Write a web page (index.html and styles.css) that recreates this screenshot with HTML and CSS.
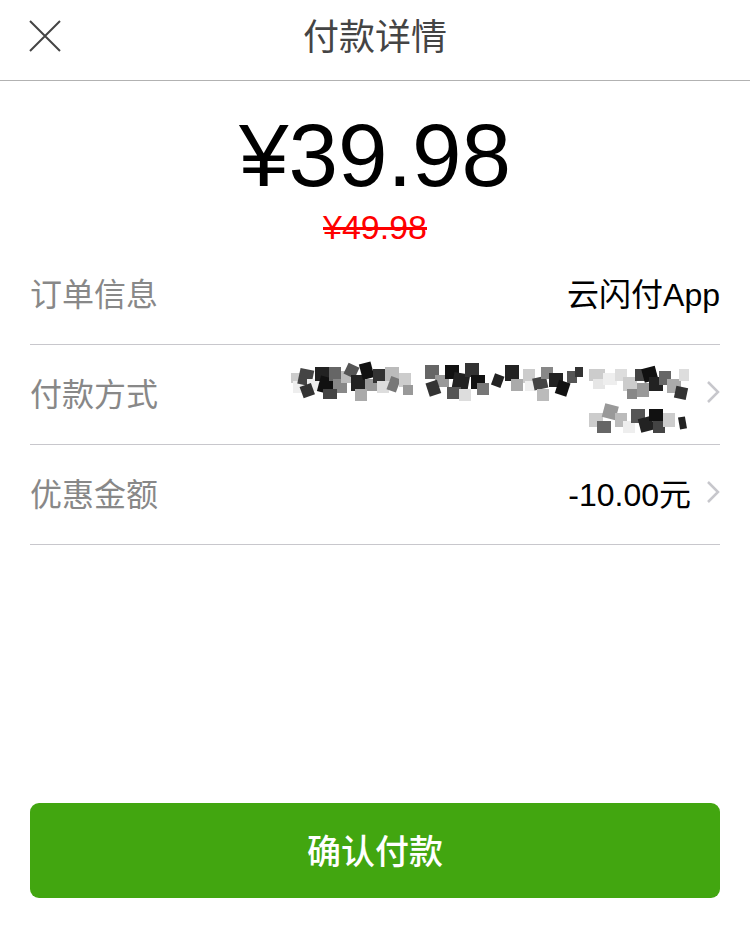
FILE: index.html
```html
<!DOCTYPE html>
<html lang="zh-CN">
<head>
<meta charset="utf-8">
<title>付款详情</title>
<link rel="stylesheet" href="styles.css">
</head>
<body>
<header class="nav">
  <div class="nav-left">
    <svg class="close" width="32" height="32" viewBox="0 0 32 32"><path d="M1 1 L31 31 M31 1 L1 31" stroke="#444" stroke-width="2" fill="none"/></svg>
  </div>
  <h1 class="nav-title">付款详情</h1>
  <div class="nav-right"></div>
</header>

<section class="price">
  <div class="price-now">¥39.98</div>
  <div class="price-old">¥49.98</div>
</section>

<ul class="rows">
  <li class="row">
    <span class="label">订单信息</span>
    <span class="value">云闪付App</span>
  </li>
  <li class="row">
    <span class="label">付款方式</span>
    <span class="value-wrap">
      <svg class="mosaic" width="402" height="76" viewBox="0 0 402 76">
        <g>
          <rect x="2" y="12" width="14" height="10" fill="#ccc"/>
          <rect x="4" y="20" width="12" height="12" fill="#eee"/>
          <rect x="10" y="8" width="14" height="16" fill="#444" transform="rotate(12 16 15)"/>
          <rect x="18" y="18" width="12" height="12" fill="#eee"/>
          <rect x="12" y="24" width="12" height="12" fill="#333" transform="rotate(-20 17 29)"/>
          <rect x="26" y="6" width="14" height="14" fill="#222"/>
          <rect x="30" y="16" width="16" height="16" fill="#111" transform="rotate(15 37 23)"/>
          <rect x="40" y="6" width="12" height="14" fill="#666"/>
          <rect x="44" y="18" width="14" height="14" fill="#888"/>
          <rect x="34" y="28" width="14" height="10" fill="#444"/>
          <rect x="52" y="10" width="12" height="12" fill="#bbb"/>
          <rect x="56" y="4" width="12" height="12" fill="#555" transform="rotate(25 63 11)"/>
          <rect x="62" y="14" width="14" height="16" fill="#222"/>
          <rect x="72" y="2" width="12" height="16" fill="#111" transform="rotate(-15 77 11)"/>
          <rect x="76" y="18" width="12" height="12" fill="#999"/>
          <rect x="66" y="28" width="12" height="12" fill="#aaa"/>
          <rect x="84" y="8" width="12" height="14" fill="#333"/>
          <rect x="88" y="20" width="12" height="12" fill="#ddd"/>
          <rect x="96" y="6" width="14" height="14" fill="#bbb"/>
          <rect x="100" y="16" width="10" height="14" fill="#777" transform="rotate(20 104 22)"/>
          <rect x="110" y="12" width="12" height="14" fill="#ccc"/>
          <rect x="114" y="24" width="10" height="10" fill="#999"/>

          <rect x="136" y="4" width="14" height="14" fill="#666"/>
          <rect x="146" y="14" width="14" height="12" fill="#999"/>
          <rect x="138" y="20" width="12" height="14" fill="#333" transform="rotate(-18 145 26)"/>
          <rect x="156" y="4" width="14" height="14" fill="#111"/>
          <rect x="164" y="12" width="16" height="18" fill="#222" transform="rotate(10 171 20)"/>
          <rect x="158" y="26" width="14" height="12" fill="#555"/>
          <rect x="176" y="2" width="14" height="14" fill="#333"/>
          <rect x="182" y="14" width="14" height="14" fill="#111"/>
          <rect x="188" y="22" width="12" height="12" fill="#777"/>
          <rect x="170" y="28" width="12" height="12" fill="#ddd"/>

          <rect x="204" y="14" width="10" height="12" fill="#222" transform="rotate(20 210 19)"/>
          <rect x="216" y="4" width="14" height="16" fill="#222"/>
          <rect x="222" y="18" width="12" height="12" fill="#aaa"/>
          <rect x="234" y="8" width="12" height="14" fill="#ccc"/>
          <rect x="236" y="20" width="10" height="10" fill="#eee"/>
          <rect x="244" y="16" width="14" height="12" fill="#444" transform="rotate(-12 252 21)"/>
          <rect x="252" y="6" width="12" height="12" fill="#888"/>
          <rect x="260" y="12" width="14" height="14" fill="#222"/>
          <rect x="268" y="20" width="12" height="14" fill="#111" transform="rotate(18 273 26)"/>
          <rect x="248" y="28" width="12" height="12" fill="#bbb"/>
          <rect x="278" y="10" width="10" height="12" fill="#555"/>
          <rect x="286" y="6" width="8" height="10" fill="#333"/>

          <rect x="300" y="8" width="16" height="12" fill="#ccc"/>
          <rect x="304" y="18" width="12" height="10" fill="#e6e6e6"/>
          <rect x="314" y="12" width="14" height="12" fill="#eee"/>
          <rect x="326" y="8" width="12" height="12" fill="#ddd"/>
          <rect x="334" y="16" width="14" height="14" fill="#ccc"/>
          <rect x="346" y="8" width="12" height="12" fill="#444"/>
          <rect x="354" y="6" width="14" height="14" fill="#111" transform="rotate(-15 362 14)"/>
          <rect x="360" y="16" width="14" height="14" fill="#222"/>
          <rect x="348" y="22" width="12" height="14" fill="#999"/>
          <rect x="370" y="10" width="12" height="14" fill="#666"/>
          <rect x="378" y="18" width="14" height="14" fill="#aaa"/>
          <rect x="386" y="26" width="12" height="12" fill="#333" transform="rotate(12 393 32)"/>
          <rect x="338" y="28" width="10" height="10" fill="#888"/>
          <rect x="390" y="8" width="10" height="12" fill="#ddd"/>

          <rect x="300" y="52" width="14" height="14" fill="#ccc"/>
          <rect x="308" y="60" width="14" height="12" fill="#666"/>
          <rect x="314" y="44" width="14" height="14" fill="#999" transform="rotate(15 322 52)"/>
          <rect x="326" y="52" width="12" height="14" fill="#bbb"/>
          <rect x="334" y="60" width="12" height="12" fill="#eee"/>
          <rect x="342" y="48" width="14" height="14" fill="#555"/>
          <rect x="350" y="56" width="14" height="14" fill="#222" transform="rotate(-15 358 62)"/>
          <rect x="360" y="48" width="14" height="12" fill="#111"/>
          <rect x="364" y="60" width="12" height="12" fill="#444"/>
          <rect x="374" y="52" width="12" height="14" fill="#ccc"/>
          <rect x="390" y="56" width="7" height="12" fill="#222" transform="rotate(-10 393 62)"/>
        </g>
      </svg>
      <svg class="chevron" width="14" height="24" viewBox="0 0 14 24"><polyline points="2,2 12,12 2,22" stroke="#c7c7cc" stroke-width="2.5" fill="none"/></svg>
    </span>
  </li>
  <li class="row">
    <span class="label">优惠金额</span>
    <span class="value-wrap">
      <span class="value">-10.00元</span>
      <svg class="chevron" width="14" height="24" viewBox="0 0 14 24"><polyline points="2,2 12,12 2,22" stroke="#c7c7cc" stroke-width="2.5" fill="none"/></svg>
    </span>
  </li>
</ul>

<div class="actions">
  <button class="confirm">确认付款</button>
</div>
</body>
</html>
```

FILE: styles.css
```css
* { box-sizing: border-box; }

body {
  margin: 0;
  background: #fff;
  font-family: "Liberation Sans", "Noto Sans CJK SC", sans-serif;
  color: #000;
}

.nav {
  display: grid;
  grid-template-columns: 100px 1fr 100px;
  align-items: center;
  height: 81px;
  border-bottom: 1px solid #b2b2b2;
}

.nav-left {
  padding-left: 29px;
  display: flex;
  align-items: center;
  margin-top: -9px;
}

.close { display: block; }

.nav-title {
  margin: 0;
  text-align: center;
  font-size: 36px;
  font-weight: normal;
  color: #444;
  margin-top: -13px;
}

.price {
  height: 164px;
  padding-top: 24px;
  text-align: center;
}

.price-now {
  font-size: 89px;
  line-height: 100px;
}

.price-old {
  margin-top: 4px;
  font-size: 34px;
  line-height: 36px;
  color: #ff0000;
  text-decoration: line-through;
}

.rows {
  list-style: none;
  margin: 0;
  padding: 0 30px;
}

.row {
  display: flex;
  justify-content: space-between;
  align-items: center;
  height: 100px;
  padding-bottom: 5px;
  border-bottom: 1px solid #c8c7cc;
}

.label {
  font-size: 32px;
  color: #888;
}

.value {
  font-size: 32px;
  color: #000;
}

.value-wrap {
  display: flex;
  align-items: center;
  gap: 15px;
}

.mosaic {
  display: block;
  margin-top: 14px;
}

.chevron { display: block; }

.actions {
  padding: 258px 30px 0;
}

.confirm {
  display: block;
  width: 100%;
  height: 95px;
  padding-bottom: 4px;
  border: none;
  border-radius: 9px;
  background: #42a610;
  color: #fff;
  font-family: "Liberation Sans", "Noto Sans CJK SC", sans-serif;
  font-size: 34px;
  font-weight: 500;
}
```
